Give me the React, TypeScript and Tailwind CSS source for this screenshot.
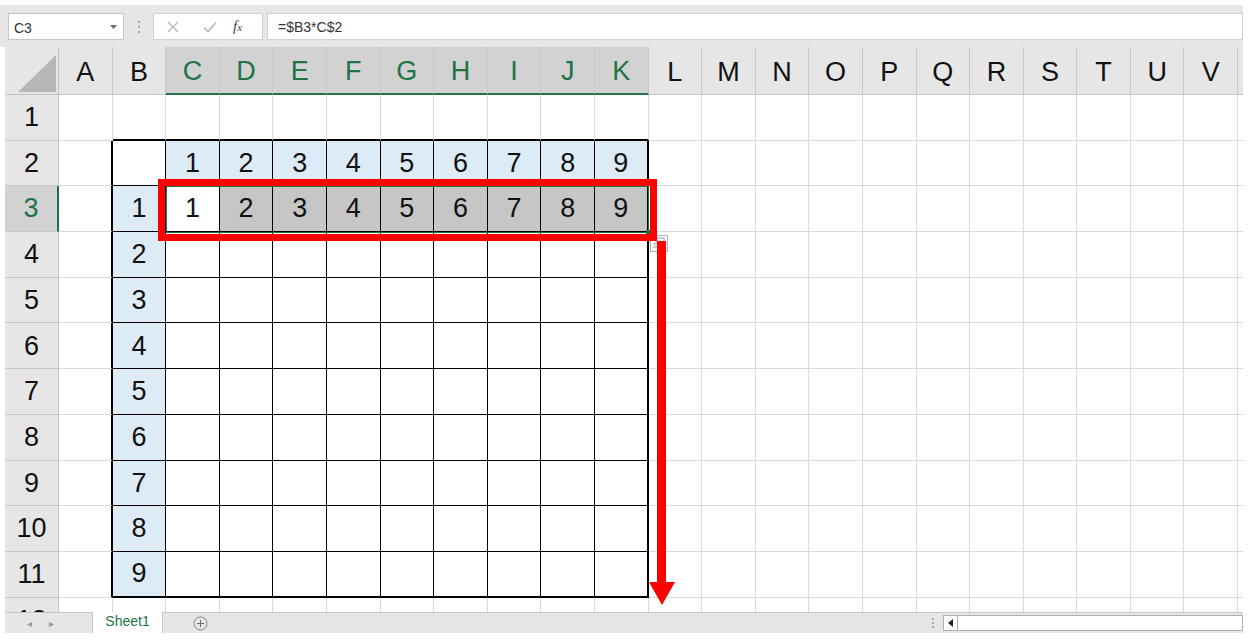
import clsx from "clsx";

const COLS = "ABCDEFGHIJKLMNOPQRSTUVW".split("");
const ROWS = [1, 2, 3, 4, 5, 6, 7, 8, 9, 10, 11, 12];

const inTable = (r: number, c: number) => r >= 2 && r <= 11 && c >= 1 && c <= 10;

function valueOf(r: number, c: number): string {
  if (r === 2 && c >= 2 && c <= 10) return String(c - 1);
  if (c === 1 && r >= 3 && r <= 11) return String(r - 2);
  if (r === 3 && c >= 2 && c <= 10) return String(c - 1);
  return "";
}

const Cell = ({ r, c }: { r: number; c: number }) => {
  const blue = (r === 2 && c >= 2 && c <= 10) || (c === 1 && r >= 3 && r <= 11);
  const selGray = r === 3 && c >= 3 && c <= 10;

  let right = "border-r border-r-[#dadada]";
  if (inTable(r, c)) right = c === 10 ? "border-r-2 border-r-black" : "border-r border-r-black";
  if (c === 0 && r >= 2 && r <= 11) right = "border-r-2 border-r-black";

  let bottom = "border-b border-b-[#dadada]";
  if (inTable(r, c)) bottom = r === 11 ? "border-b-2 border-b-black" : "border-b border-b-black";
  if (r === 1 && c >= 1 && c <= 10) bottom = "border-b-2 border-b-black";

  return (
    <div
      className={clsx(
        "flex items-center justify-center text-[27px] text-[#111]",
        right,
        bottom,
        blue && "bg-[#ddebf7]",
        selGray && "bg-[#c6c6c6]",
        !blue && !selGray && "bg-white"
      )}
    >
      {valueOf(r, c)}
    </div>
  );
};

const SheetGrid = () => (
  <div className="relative ml-[5px] h-[565px] w-[1238px] overflow-hidden">
    <div className="grid grid-cols-[54px_repeat(23,53.6px)] grid-rows-[48px_repeat(12,45.7px)]">
      {/* corner */}
      <div className="relative border-r border-b border-[#c4c4c4] bg-[#e6e6e6]">
        <svg className="absolute left-[13px] top-[8px]" width="38" height="37" viewBox="0 0 38 37">
          <polygon points="38,0 38,37 0,37" fill="#b7b7b7" />
        </svg>
      </div>
      {COLS.map((col, i) => {
        const sel = i >= 2 && i <= 10;
        return (
          <div
            key={col}
            className={clsx(
              "flex items-center justify-center border-r border-r-[#c8c8c8] pt-[3px] text-[27px]",
              sel
                ? "border-b-2 border-b-[#217346] bg-[#d2d2d2] text-[#217346]"
                : "border-b border-b-[#c4c4c4] bg-[#e6e6e6] text-[#111]"
            )}
          >
            {col === "W" ? "" : col}
          </div>
        );
      })}
      {ROWS.map((r) => [
        <div
          key={`h${r}`}
          className={clsx(
            "flex items-center justify-center border-b border-b-[#c8c8c8] text-[27px]",
            r === 3
              ? "border-r-2 border-r-[#217346] bg-[#d2d2d2] text-[#217346]"
              : "border-r border-r-[#c4c4c4] bg-[#e6e6e6] text-[#111]"
          )}
        >
          {r}
        </div>,
        ...COLS.map((_, c) => <Cell key={`${r}-${c}`} r={r} c={c} />),
      ])}
    </div>

    {/* selection outline C3:K3 */}
    <div className="absolute left-[161px] top-[139px] h-[47px] w-[483px] border border-[#217346]" />
    <div className="absolute left-[641px] top-[183px] h-[5px] w-[5px] bg-[#217346]" />

    {/* auto fill options button */}
    <svg className="absolute left-[645px] top-[188px]" width="18" height="17" viewBox="0 0 18 17">
      <rect x="0.5" y="0.5" width="17" height="16" fill="#fff" stroke="#b0b0b0" />
      <rect x="6" y="3" width="8" height="4" fill="#fff" stroke="#7a9cc6" />
      <line x1="3" y1="9" x2="10" y2="9" stroke="#9a9a9a" />
      <line x1="3" y1="12" x2="10" y2="12" stroke="#9a9a9a" />
    </svg>

    {/* red highlight box */}
    <div className="absolute left-[153px] top-[132px] h-[62px] w-[499px] border-[7px] border-[#ff0000]" />

    {/* red arrow */}
    <svg className="absolute left-[644px] top-[194px]" width="26" height="365" viewBox="0 0 26 365">
      <rect x="8" y="0" width="9" height="344" fill="#ff0000" />
      <polygon points="0,341 26,341 13,364" fill="#ff0000" />
    </svg>
  </div>
);

const Toolbar = () => (
  <div className="relative flex h-[42px] w-[1243px] items-start bg-[#e6e6e6] pt-[8px] text-[14px] text-[#333]">
    <div className="ml-[8px] flex h-[27px] w-[116px] items-center justify-between border border-[#c6c6c6] bg-white pl-[5px] pr-[6px]">
      <span className="pt-[3px]">C3</span>
      <svg width="7" height="4" viewBox="0 0 7 4">
        <polygon points="0,0 7,0 3.5,4" fill="#6b6b6b" />
      </svg>
    </div>
    <div className="ml-[11px] flex h-[27px] w-[8px] flex-col items-center justify-center gap-[3px]">
      <span className="h-[2px] w-[2px] bg-[#a8a8a8]" />
      <span className="h-[2px] w-[2px] bg-[#a8a8a8]" />
      <span className="h-[2px] w-[2px] bg-[#a8a8a8]" />
    </div>
    <div className="ml-[10px] flex h-[27px] w-[110px] items-center border border-[#d0d0d0] bg-white">
      <svg className="ml-[13px]" width="12" height="12" viewBox="0 0 12 12">
        <path d="M1 1 L11 11 M11 1 L1 11" stroke="#b8b8b8" strokeWidth="1.4" />
      </svg>
      <svg className="ml-[24px]" width="14" height="12" viewBox="0 0 14 12">
        <path d="M1 6.5 L5 10.5 L13 1.5" stroke="#b8b8b8" strokeWidth="1.6" fill="none" />
      </svg>
      <span className="ml-[16px] font-['Liberation_Serif',serif] text-[15px] italic text-[#444]">
        f<span className="text-[11px]">x</span>
      </span>
    </div>
    <div className="ml-[4px] flex h-[27px] flex-1 items-center border border-[#d0d0d0] bg-white pl-[10px]">
      <span className="pt-[2px]">=$B3*C$2</span>
    </div>
  </div>
);

const TabBar = () => (
  <div className="ml-[5px] flex h-[21px] w-[1238px] bg-[#e6e6e6] text-[#9a9a9a]">
    <div className="flex w-[87px] items-center border-t border-[#c6c6c6] pl-[22px] text-[10px]">
      <span>◂</span>
      <span className="ml-[17px]">▸</span>
    </div>
    <div className="flex w-[71px] items-center justify-center border-x border-[#c6c6c6] bg-white pb-[2px] text-[14px] text-[#217346]">
      Sheet1
    </div>
    <div className="flex w-[763px] items-center border-t border-[#c6c6c6] pl-[30px]">
      <svg width="15" height="15" viewBox="0 0 15 15">
        <circle cx="7.5" cy="7.5" r="6.5" fill="none" stroke="#8a8a8a" />
        <path d="M7.5 4 V11 M4 7.5 H11" stroke="#6a6a6a" />
      </svg>
    </div>
    <div className="flex w-[14px] flex-col items-center justify-center gap-[2px] border-t border-[#c6c6c6]">
      <span className="h-[2px] w-[2px] bg-[#a8a8a8]" />
      <span className="h-[2px] w-[2px] bg-[#a8a8a8]" />
      <span className="h-[2px] w-[2px] bg-[#a8a8a8]" />
    </div>
    <div className="flex flex-1 items-center border-t border-[#c6c6c6] pl-[3px]">
      <div className="flex h-[16px] flex-1 border border-[#b0b0b0] bg-white">
        <div className="flex w-[14px] items-center justify-center border-r border-[#b0b0b0]">
          <svg width="5" height="8" viewBox="0 0 5 8">
            <polygon points="5,0 5,8 0,4" fill="#222" />
          </svg>
        </div>
      </div>
    </div>
  </div>
);

export default function App() {
  return (
    <div className="h-[640px] w-[1252px] overflow-hidden bg-white pt-[5px] font-['Liberation_Sans',Arial,sans-serif]">
      <Toolbar />
      <SheetGrid />
      <TabBar />
    </div>
  );
}
